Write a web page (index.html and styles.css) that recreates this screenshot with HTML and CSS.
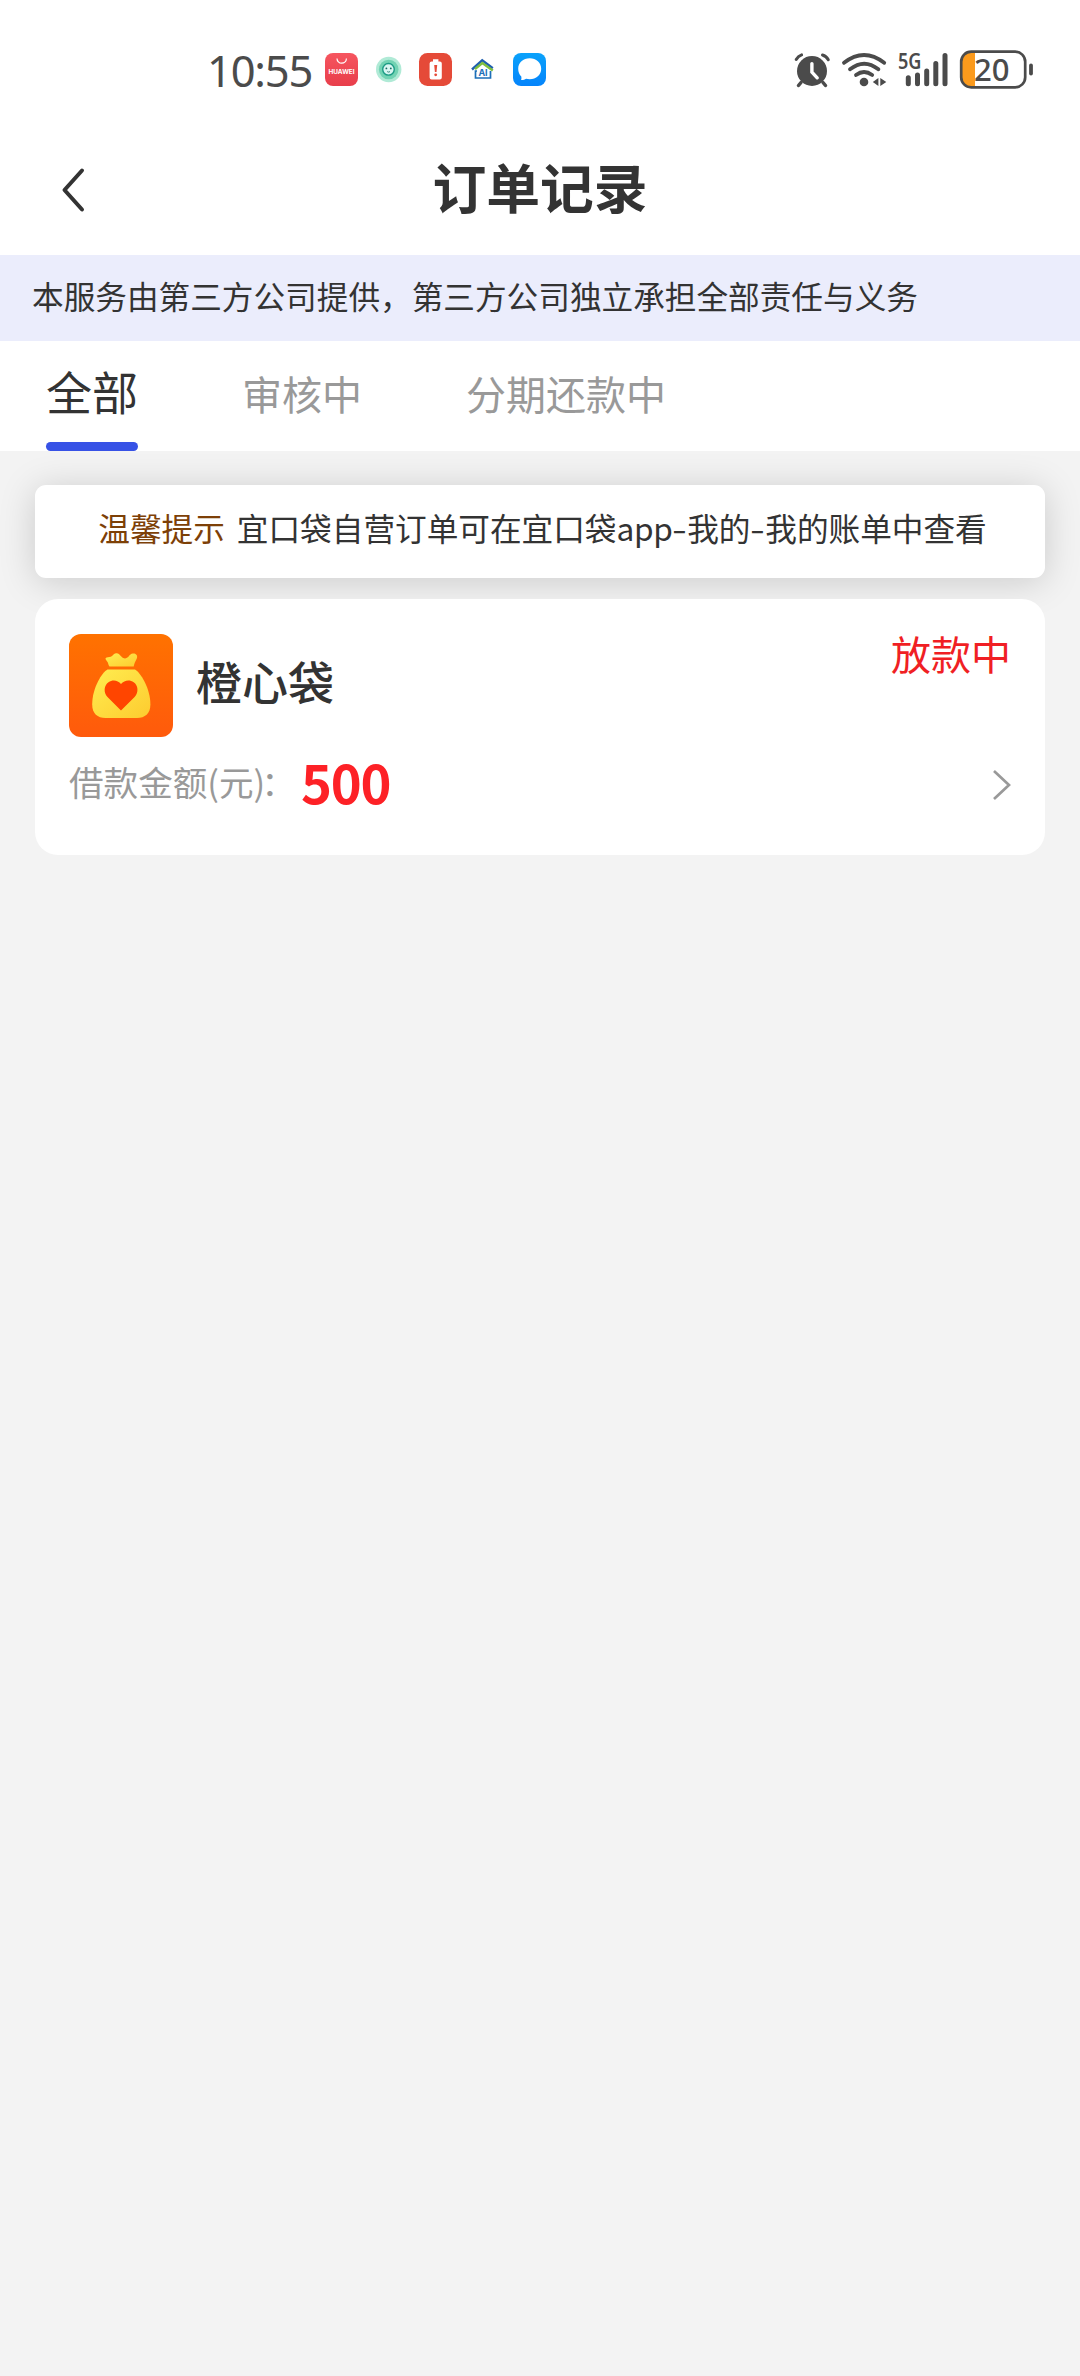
FILE: index.html
```html
<!DOCTYPE html>
<html lang="zh-CN">
<head>
<meta charset="utf-8">
<title>订单记录</title>
<link rel="stylesheet" href="styles.css">
</head>
<body>
<div class="status">
  <span class="time">10:55</span>
  <svg class="left-icons" width="222" height="34" viewBox="325 53 222 34">
    <defs>
      <linearGradient id="hw" x1="0" y1="0" x2="0" y2="1"><stop offset="0" stop-color="#f6555f"/><stop offset="1" stop-color="#e83e4b"/></linearGradient>
      <linearGradient id="bl" x1="0" y1="0" x2="0" y2="1"><stop offset="0" stop-color="#0aa2fb"/><stop offset="1" stop-color="#0584fb"/></linearGradient>
    </defs>
    <rect x="325" y="53" width="33" height="33" rx="8" fill="url(#hw)"/>
    <path d="M337 58.500a4.700 4.700 0 0 0 9.400 0" fill="none" stroke="#fff" stroke-width="1.200"/>
    <text x="341.500" y="74" class="hw-text" text-anchor="middle" textLength="26" lengthAdjust="spacingAndGlyphs">HUAWEI</text>
    <circle cx="388.700" cy="69.500" r="12.700" fill="#b0ead6"/>
    <circle cx="388.700" cy="69.500" r="9.800" fill="#72d3b3"/>
    <circle cx="388.500" cy="69.300" r="5.800" fill="#d9f6f2" stroke="#1b9b85" stroke-width="1.400"/>
    <circle cx="386.400" cy="68.400" r=".9" fill="#176a60"/><circle cx="390.800" cy="68.400" r=".9" fill="#176a60"/>
    <path d="M387.200 71.600q1.400 1 2.800 0" fill="none" stroke="#176a60" stroke-width=".8"/>
    <rect x="419" y="53" width="33" height="33" rx="8.500" fill="#e54a38"/>
    <path d="M433 59.200h5.400v2.200h1.400a2 2 0 0 1 2 2v14a2 2 0 0 1-2 2h-8.200a2 2 0 0 1-2-2v-14a2 2 0 0 1 2-2h1.400z" fill="#fff"/>
    <path d="M434.200 65h3l-.7 7h-1.600z" fill="#e54a38"/><circle cx="435.700" cy="74.800" r="1.400" fill="#e54a38"/>
    <path d="M472 69.500l10.200-9.200 10.600 8" fill="none" stroke="#1f5fae" stroke-width="2.400"/>
    <path d="M475 69.200l7.300-6.200 10.500 7.400" fill="none" stroke="#7fbf3f" stroke-width="2.400"/>
    <path d="M477 71h-1.500v7h15v-7" fill="none" stroke="#1d6fb8" stroke-width="1.700"/>
    <text x="483" y="76" class="ai-text" text-anchor="middle">AI</text>
    <rect x="513" y="53" width="33" height="33" rx="8" fill="url(#bl)"/>
    <path d="M529.700 58.300c6.500 0 11.500 4.500 11.500 10.400s-5 10.500-11.500 10.500c-1.200 0-2.500-.1-3.600-.4-1.500 1-3.100 1.300-5 1.200.4-1.200.5-2.300.2-3.500-2-1.900-3.100-4.700-3.100-7.800 0-5.900 5-10.400 11.500-10.400z" fill="#fff"/>
  </svg>
  <svg class="right-icons" width="242" height="50" viewBox="792 44 242 50">
    <g fill="none" stroke="#4b4b4b" stroke-linecap="round">
      <circle cx="812" cy="70" r="15" fill="#4b4b4b" stroke="none"/>
      <path d="M796.200 58.500q2-3.500 5.400-4.600M822.500 54q3.800 1.200 5.800 4.800" stroke-width="3"/>
      <path d="M801 81.500l-2.500 3M823 81.500l2.500 3" stroke-width="3.500"/>
      <path d="M811.900 62.600v8.600l5.300 5.600" stroke="#fff" stroke-width="3.400" stroke-linejoin="round"/>
      <path d="M844 61.800q20-15.600 40.200 0M850 68.300q14.200-11.200 28.400 0M856 74q8-6 16.200 0" stroke-width="3.800"/>
      <circle cx="864" cy="81" r="4.300" fill="#4b4b4b" stroke="none"/>
      <path d="M878.400 77v8l-5.600-4zM880.300 77l6 4-6 4z" fill="#4b4b4b" stroke="none"/>
      <path d="M908.300 76.800v6M917.500 74v8.800M926.700 70v12.800M935.800 62.500v20.300M945 54.500v28.300" stroke-width="5"/>
    </g>
    <text x="898" y="68.300" class="net" textLength="23.500" lengthAdjust="spacingAndGlyphs">5G</text>
    <path d="M975 50.700h-5a9 9 0 0 0-9 9v18a9 9 0 0 0 9 9h5z" fill="#fb9a1c"/>
    <rect x="961.200" y="50.700" width="64" height="35.600" rx="10" fill="none" stroke="#4b4b4b" stroke-width="2.700"/>
    <path d="M1031 64.500v8" stroke="#4b4b4b" stroke-width="3.800" stroke-linecap="round"/>
    <text x="974" y="79.500" class="batt" textLength="35.500" lengthAdjust="spacingAndGlyphs">20</text>
  </svg>
</div>
<header class="nav">
  <svg class="back" width="26" height="46" viewBox="0 0 26 46"><path d="M22 3.500L4.500 23 22 42.500" fill="none" stroke="#333" stroke-width="4" stroke-linecap="round" stroke-linejoin="round"/></svg>
  <h1 class="title">订单记录</h1>
</header>
<div class="banner">本服务由第三方公司提供，第三方公司独立承担全部责任与义务</div>
<nav class="tabs">
  <span class="tab active">全部</span>
  <span class="tab">审核中</span>
  <span class="tab">分期还款中</span>
</nav>
<main class="content">
  <div class="notice"><span class="tip">温馨提示</span><span>宜口袋自营订单可在宜口袋<span class="latin">app</span><span class="dash">-</span>我的<span class="dash">-</span>我的账单中查看</span></div>
  <section class="card">
    <div class="card-head">
      <svg class="logo" width="104" height="104" viewBox="0 0 104 104">
        <defs>
          <linearGradient id="or" x1="0" y1="0" x2="0" y2="1"><stop offset="0" stop-color="#ff7200"/><stop offset="1" stop-color="#ff5a0c"/></linearGradient>
          <linearGradient id="ye" x1="0" y1="0" x2="1" y2="1"><stop offset="0" stop-color="#ffed50"/><stop offset="1" stop-color="#fdcb2f"/></linearGradient>
        </defs>
        <rect width="104" height="103" rx="12" fill="url(#or)"/>
        <path d="M40.500 32.500h24.200c.6-3 1.800-5.200 3.100-7.900 1-2.200-.2-4.600-2.500-5-3.200-.6-4 .8-5.700 3-1.900 2.300-5 2.500-7 .2-2-2.200-3.100-3.900-5.600-3.600-2.300.3-3.200 2.700-5.300 3.600-1.600.8-4 .1-5 1.300-.9 1.400 1.300 2.800 2 4.200.6 1.300.7 3 1.800 4.200z" fill="url(#ye)"/>
        <path d="M38.500 35.500h27.500c5 2.600 15.400 18.500 15.400 35 0 9-5.500 13.500-13.400 13.500H36.500c-8 0-13.300-4.500-13.300-13.500 0-16.500 10-32.400 15.300-35z" fill="url(#ye)"/>
        <path d="M52 76.500L38.500 63c-4.300-4.500-3.500-11.500 1-14.700 4.200-3 9.400-2 12.500 1.800 3.200-3.800 8.500-4.800 12.700-1.800 4.500 3.200 5.200 10.200.9 14.700z" fill="#ff4500"/>
      </svg>
      <span class="name">橙心袋</span>
      <span class="state">放款中</span>
    </div>
    <div class="card-row">
      <span class="label">借款金额(元)<span class="colon">：</span></span>
      <span class="amount">500</span>
      <svg class="more" width="20" height="32" viewBox="0 0 20 32"><path d="M3 2L18 16 3 30" fill="none" stroke="#999" stroke-width="2.700"/></svg>
    </div>
  </section>
</main>
</body>
</html>
```
FILE: styles.css
```css
* { box-sizing: border-box; }
body {
  margin: 0;
  min-height: 2376px;
  background: #f3f3f3;
  color: #333;
  font-family: "Noto Sans CJK SC", sans-serif;
}
svg { display: block; flex: none; overflow: visible; }
.status {
  display: flex;
  align-items: center;
  height: 124px;
  padding: 15px 46px 0 207px;
  background: #fff;
}
.time {
  width: 118px;
  font: 43.500px/60px "Noto Sans", sans-serif;
  letter-spacing: -1.200px;
  color: #4b4b4b;
}
.right-icons { margin-left: auto; }
.hw-text { font: 700 5.800px Inter, sans-serif; fill: #fff; }
.ai-text { font: 700 9px Inter, sans-serif; fill: #1d6fb8; }
.net { font: 600 22px "Noto Sans", sans-serif; fill: #4b4b4b; }
.batt { font: 500 31px "Noto Sans", sans-serif; fill: #4b4b4b; }
.nav {
  display: grid;
  grid-template-columns: 60px 1fr 60px;
  align-items: center;
  height: 131px;
  padding-bottom: 7px;
  background: #fff;
}
.back { margin: 8px 0 0 60px; }
.title {
  margin: 0;
  text-align: center;
  font-size: 53.800px;
  line-height: 80px;
  font-weight: 700;
}
.banner {
  height: 86px;
  padding: 16px 32px 0;
  background: #ebedfc;
  font-size: 31.650px;
  line-height: 48px;
  white-space: nowrap;
}
.tabs {
  display: flex;
  align-items: baseline;
  gap: 104px;
  height: 110px;
  padding: 14px 46px 0;
  background: #fff;
  white-space: nowrap;
}
.tab { font-size: 40px; line-height: 70px; color: #999; }
.tab.active {
  display: flex;
  flex-direction: column;
  justify-content: space-between;
  height: 96px;
  font-size: 46px;
  color: #333;
}
.tab.active::after {
  content: "";
  height: 9px;
  border-radius: 4.500px;
  background: #3752e6;
}
.content { padding: 34px 35px; }
.notice {
  display: flex;
  justify-content: center;
  gap: 12px;
  height: 93px;
  margin-bottom: 21px;
  padding: 18px 0 0 5px;
  border-radius: 11px;
  background: #fff;
  box-shadow: 0 4px 36px rgba(0, 0, 0, .17);
  font-size: 31.650px;
  line-height: 48px;
  white-space: nowrap;
}
.tip { color: #7d4007; }
.latin { letter-spacing: -.4px; }
.dash { display: inline-block; width: 14.800px; text-align: center; transform: scaleX(1.350); }
.card {
  height: 256px;
  padding: 35px 34px;
  border-radius: 23px;
  background: #fff;
  position: relative;
}
.card-head { display: flex; height: 104px; }
.name { margin: 11px 0 0 23px; font-size: 46px; line-height: 70px; font-weight: 500; }
.state { margin: -11px 0 0 auto; font-size: 40px; line-height: 60px; color: #f01f24; }
.card-row { display: flex; align-items: center; height: 92px; }
.label { width: 232px; margin-top: -6px; font-size: 34.600px; line-height: 52px; color: #999; white-space: nowrap; }
.colon { margin-left: -4px; }
.amount { margin-top: -6px; font-size: 52.500px; line-height: 80px; font-weight: 700; letter-spacing: -1.200px; color: #fd2126; }
.more { margin: 1px 0 0 auto; }
```
